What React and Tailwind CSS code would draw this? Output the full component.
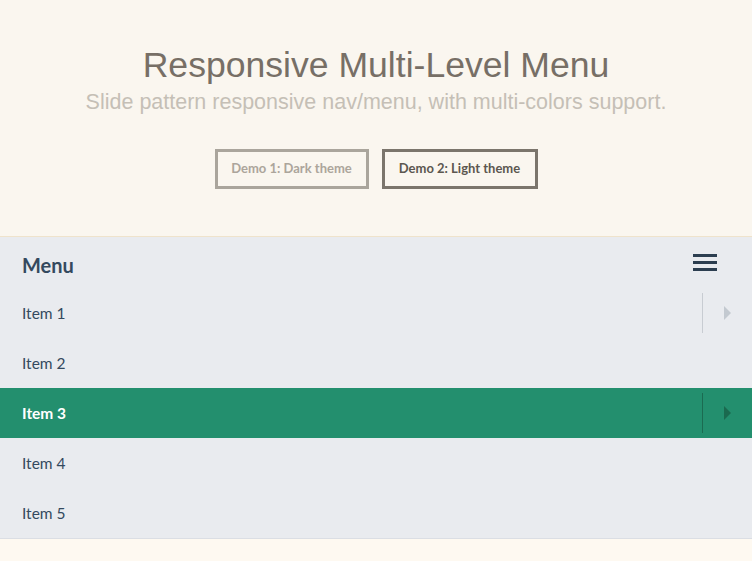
import React from "react";

function Arrow({ active }) {
  return (
    <div className="flex h-full items-center">
      <div className={`h-10 w-px ${active ? "bg-[#1b6b51]" : "bg-[#c8ccd2]"}`} />
      <div className="flex w-[49px] items-center justify-center">
        <svg width="9" height="14" viewBox="0 0 9 14">
          <polygon points="1,0 8,7 1,14" fill={active ? "#1a6a4f" : "#c3c9d0"} />
        </svg>
      </div>
    </div>
  );
}

export default function App() {
  const items = [
    { label: "Item 1", sub: true },
    { label: "Item 2" },
    { label: "Item 3", sub: true, active: true },
    { label: "Item 4" },
    { label: "Item 5" },
  ];
  return (
    <div className="flex h-[561px] w-[752px] flex-col bg-[#fef9f1]">
      <header className="flex h-[236px] flex-col items-center bg-[#faf6ef] pt-[43px] font-['Liberation_Sans',Arial,sans-serif]">
        <h1 className="text-[35.6px] leading-[44px] text-[#776f66]">Responsive Multi-Level Menu</h1>
        <p className="mt-[2px] text-[21.5px] leading-[26px] text-[#c5bfb6]">Slide pattern responsive nav/menu, with multi-colors support.</p>
        <div className="mt-[34px] flex gap-[13px] font-['Lato',sans-serif] text-[13px] font-bold">
          <button className="h-10 w-[154px] border-[3px] border-[#aaa59c] text-[#aca59b]">Demo 1: Dark theme</button>
          <button className="h-10 w-[156px] border-[3px] border-[#7b756c] text-[#5c574f]">Demo 2: Light theme</button>
        </div>
      </header>
      <nav className="border-y border-t-[#efe3cc] border-b-[#dbdee4] bg-[#e9ebef] font-['Lato',sans-serif] text-[#34495e]">
        <div className="flex h-[51px] items-center justify-between pl-[22px] pr-[35px]">
          <span className="pt-1 text-[20px] font-bold text-[#34495e]">Menu</span>
          <div className="flex w-6 flex-col gap-1">
            <span className="h-[3px] bg-[#2c3e50]" />
            <span className="h-[3px] bg-[#2c3e50]" />
            <span className="h-[3px] bg-[#2c3e50]" />
          </div>
        </div>
        {items.map((it) => (
          <div
            key={it.label}
            className={`flex h-[50px] items-center justify-between pl-[22px] text-[15.5px] ${
              it.active ? "bg-[#238f6e] font-bold text-white" : ""
            }`}
          >
            <span className="pt-[2px]">{it.label}</span>
            {it.sub && <Arrow active={it.active} />}
          </div>
        ))}
      </nav>
    </div>
  );
}
